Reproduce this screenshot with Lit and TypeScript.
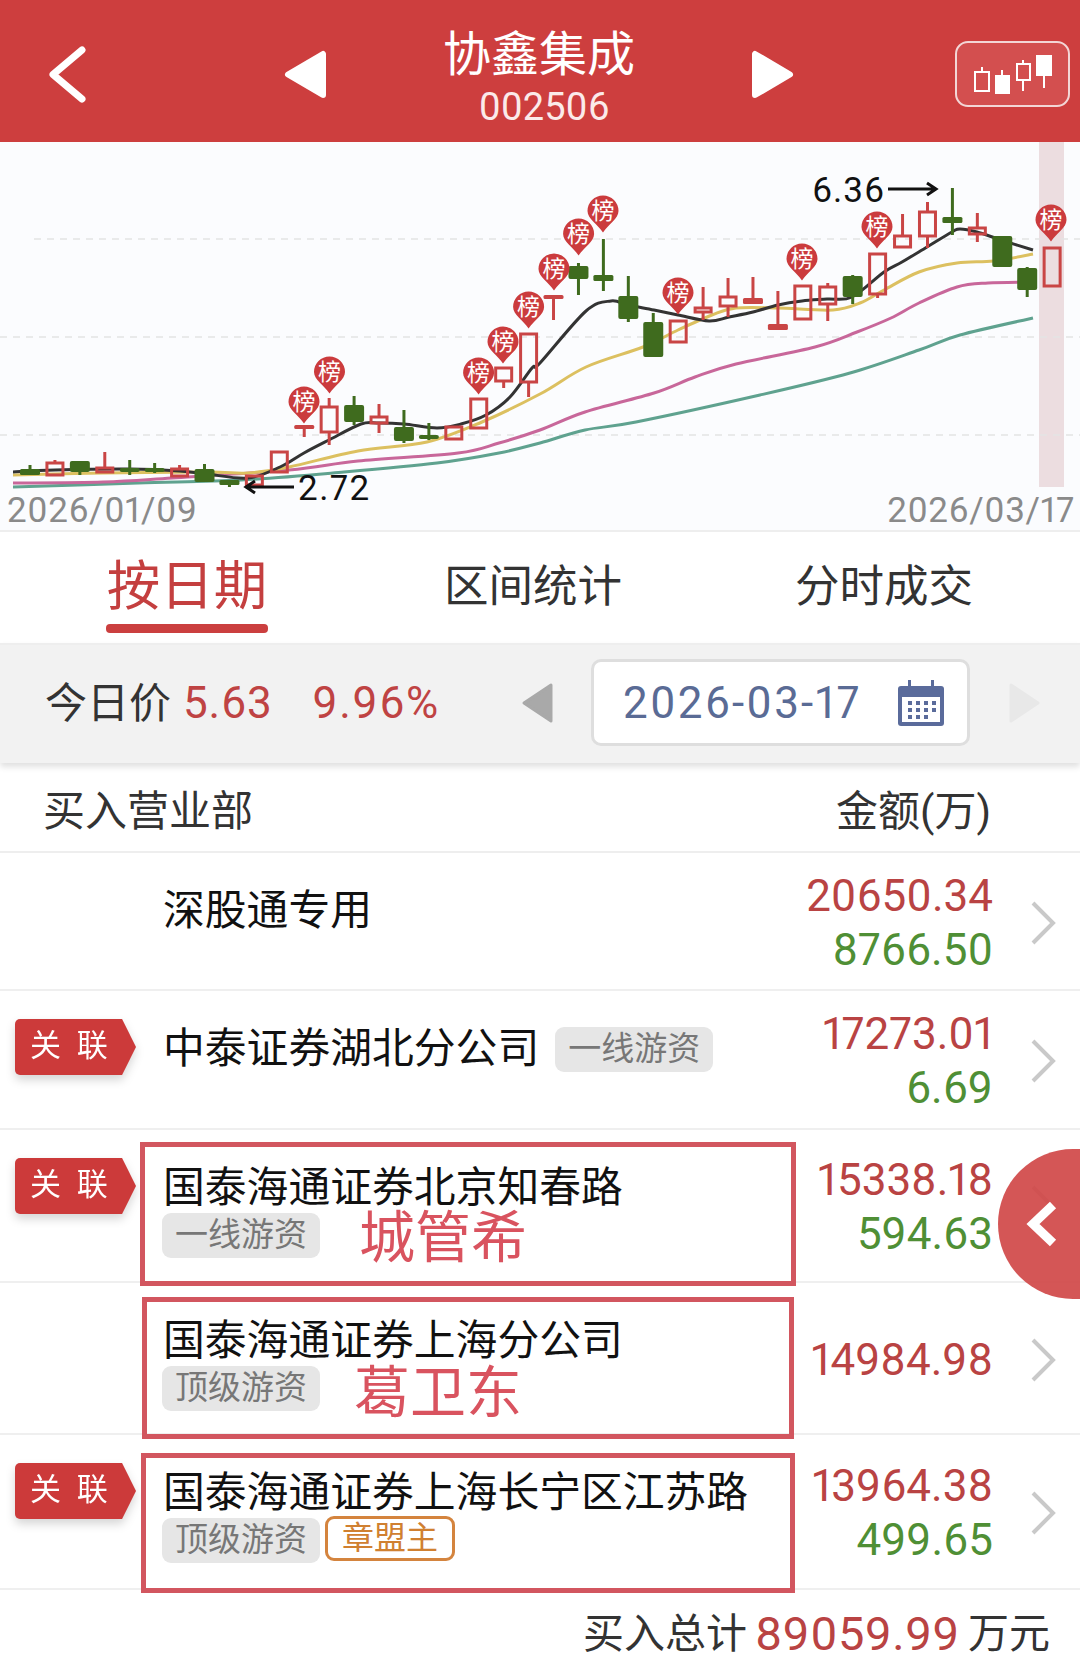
import { LitElement, html, css, svg } from 'lit';
import { customElement } from 'lit/decorators.js';

const RED = '#c94545';
const GREEN = '#3f6b1e';

// [kind, wickTop, bodyTop, bodyBottom, wickBottom] in page pixels
type Candle = ['r' | 'g', number, number, number, number];
const candles: Candle[] = [
  ['g', 465, 470, 473, 475], ['r', 460, 463, 475, 475], ['g', 461, 461, 472, 475], ['r', 452, 468, 472, 473],
  ['g', 460, 468, 472, 475], ['g', 463, 468, 472, 473], ['r', 465, 469, 476, 477], ['g', 464, 469, 482, 482],
  ['g', 480, 481, 483, 487], ['r', 476, 476, 485, 487], ['r', 451, 452, 472, 472], ['r', 426, 426, 427, 437],
  ['r', 398, 407, 432, 445], ['g', 396, 405, 422, 425], ['r', 404, 417, 423, 433], ['g', 410, 427, 441, 443],
  ['g', 423, 435, 439, 440], ['r', 427, 427, 439, 440], ['r', 399, 399, 428, 428], ['r', 368, 368, 381, 388],
  ['r', 333, 334, 382, 397], ['r', 296, 296, 297, 320], ['g', 263, 266, 279, 295], ['g', 239, 276, 279, 291],
  ['g', 276, 296, 319, 322], ['g', 313, 322, 357, 357], ['r', 321, 321, 342, 342], ['r', 287, 308, 312, 320],
  ['r', 278, 297, 306, 317], ['r', 277, 299, 302, 303], ['r', 291, 325, 328, 328], ['r', 285, 286, 319, 320],
  ['r', 283, 287, 304, 321], ['g', 275, 276, 297, 304], ['r', 253, 254, 294, 298], ['r', 214, 236, 247, 247],
  ['r', 202, 212, 236, 248], ['g', 188, 218, 221, 235], ['r', 213, 228, 234, 242], ['g', 236, 236, 267, 267],
  ['g', 267, 268, 290, 297], ['r', 248, 248, 286, 286],
];
const candleX = (i: number) => 30 + i * 24.93;

const lines = [
  { color: '#5fa28f', pts: '13,487 138,483 241,480 344,472 437,463 499,453 540,443 585,430 636,422 760,395 850,373 919,350 960,335 1033,318' },
  { color: '#c8679a', pts: '13,483 103,482 172,478 289,470 358,461 458,453 499,443 540,430 585,412 654,393 695,377 736,364 815,347 857,332 891,318 919,303 957,287 988,283 1033,282' },
  { color: '#dcc060', pts: '13,475 103,473 207,472 248,473 289,467 358,451 427,442 482,422 540,394 586,367 643,347 678,330 712,315 736,308 778,308 833,310 860,303 884,290 919,272 957,263 994,261 1033,254' },
  { color: '#333333', pts: '13,472 55,470 130,469 180,471 207,474 248,478 280,467 304,453 329,440 361,424 379,423 404,424 437,428 461,424 486,415 510,397 532,368 540,363 586,311 611,301 628,305 654,310 678,315 709,321 729,317 753,312 778,305 802,301 827,299 852,297 884,272 902,262 927,247 952,232 960,229 977,232 1001,240 1033,250' },
];

// catmull-rom through the points, the moving averages are not straight segments
const smooth = (pts: string) => {
  const p = pts.split(' ').map((s) => s.split(',').map(Number));
  let d = `M${p[0][0]} ${p[0][1]}`;
  for (let i = 0; i < p.length - 1; i++) {
    const a = p[Math.max(i - 1, 0)];
    const b = p[i];
    const c = p[i + 1];
    const e = p[Math.min(i + 2, p.length - 1)];
    d += ` C${b[0] + (c[0] - a[0]) / 6} ${b[1] + (c[1] - a[1]) / 6} ${c[0] - (e[0] - b[0]) / 6} ${c[1] - (e[1] - b[1]) / 6} ${c[0]} ${c[1]}`;
  }
  return d;
};

// 榜 pins, x and y of the circle centre
const pins = [[304, 402], [329.5, 372], [478.6, 373], [503, 342], [528.6, 307], [554, 269], [578.6, 234], [603, 211], [678, 293], [802, 259], [877, 227], [1051, 220]];

const grid = [239, 337, 435];

interface Row {
  name: string;
  height: number;
  linked?: boolean;
  tags?: string[];
  gold?: string;
  inlineTag?: boolean;
  buy: string;
  sell?: string;
}

const rows: Row[] = [
  { name: '深股通专用', height: 138, buy: '20650.34', sell: '8766.50' },
  { name: '中泰证券湖北分公司', height: 139, linked: true, tags: ['一线游资'], inlineTag: true, buy: '17273.01', sell: '6.69' },
  { name: '国泰海通证券北京知春路', height: 153, linked: true, tags: ['一线游资'], buy: '15338.18', sell: '594.63' },
  { name: '国泰海通证券上海分公司', height: 152, tags: ['顶级游资'], buy: '14984.98' },
  { name: '国泰海通证券上海长宁区江苏路', height: 155, linked: true, tags: ['顶级游资'], gold: '章盟主', buy: '13964.38', sell: '499.65' },
];

@customElement('app-root')
export class AppRoot extends LitElement {
  static styles = css`
    :host {
      display: block;
      position: relative;
      width: 1080px;
      height: 1656px;
      overflow: hidden;
      background: #fff;
      color: #333;
      font-family: Roboto, "Noto Sans CJK SC", sans-serif;
      font-variant-numeric: proportional-nums;
    }

    /* top bar */
    .top {
      display: grid;
      grid-template-columns: 284px 43px 1fr 43px 286px;
      align-items: center;
      height: 142px;
      padding-top: 6px;
      box-sizing: border-box;
      background: #cd3e3e;
      color: #fff;
    }
    .back { padding-left: 48px; }
    .top svg { display: block; }
    .title { text-align: center; padding-top: 10px; }
    .title b { display: block; font-weight: 400; font-size: 48px; line-height: 56px; }
    .title span { display: block; font-size: 38px; line-height: 49px; padding-left: 10px; color: #fbeaea; }
    .switch {
      justify-self: end;
      margin-right: 10px;
      width: 115px;
      height: 66px;
      box-sizing: border-box;
      border: 2px solid #f3d6d6;
      border-radius: 13px;
      background: #d34f4f;
    }

    /* kline */
    .chart {
      height: 390px;
      background: #fbfcfe;
      border-bottom: 2px solid #eeeeee;
      box-sizing: border-box;
    }
    .chart svg { display: block; overflow: visible; }
    .chart text { font-family: Roboto, "Noto Sans CJK SC", sans-serif; }

    /* tabs */
    .tabs {
      display: flex;
      height: 111px;
      padding-left: 14px;
      box-sizing: border-box;
    }
    .tab {
      width: 346px;
      display: flex;
      flex-direction: column;
      align-items: center;
      font-size: 44.5px;
      line-height: 60px;
      padding-top: 25px;
      box-sizing: border-box;
    }
    .tab:last-child { margin-left: 5px; }
    .tab.on {
      color: #c43f3f;
      font-size: 53.5px;
      line-height: 64px;
      padding-top: 23px;
    }
    .tab.on::after {
      content: "";
      width: 162px;
      height: 9px;
      margin-top: 5px;
      border-radius: 4px;
      background: #cb3f3f;
    }

    /* date bar */
    .dates {
      position: relative;
      display: flex;
      align-items: center;
      height: 120px;
      padding: 0 0 3px 45px;
      background: #f2f2f2;
      border-top: 2px solid #eeeeee;
      box-sizing: border-box;
      box-shadow: 0 4px 6px rgba(0, 0, 0, 0.12);
    }
    .today { width: 476px; display: flex; align-items: center; font-size: 42px; }
    .label { position: relative; top: -3px; }
    .today span.num { font-size: 44px; color: #bf4343; margin-left: 12px; letter-spacing: 0.8px; }
    .today span.num + span.num { margin-left: 40px; letter-spacing: 1.6px; }
    .datebox {
      display: flex;
      align-items: center;
      justify-content: space-between;
      width: 379px;
      height: 87px;
      margin: 0 39px 0 38px;
      padding: 0 22px 0 29px;
      box-sizing: border-box;
      background: #fff;
      border: 3px solid #dedede;
      border-radius: 10px;
      color: #5a6b95;
      font-size: 44px;
      letter-spacing: 2.2px;
    }

    /* table */
    .head {
      display: flex;
      justify-content: space-between;
      align-items: center;
      height: 90px;
      padding: 0 89px 0 43px;
      font-size: 42px;
      border-bottom: 2px solid #eeeeee;
      box-sizing: border-box;
    }
    .list { position: relative; }
    .row {
      display: grid;
      grid-template-columns: 164px 1fr auto 87px;
      border-bottom: 2px solid #efefef;
      box-sizing: border-box;
    }
    .slot { padding: 28px 0 0 15px; }
    .linked { filter: drop-shadow(0 5px 5px rgba(0, 0, 0, 0.16)); width: 121px; }
    .linked span {
      display: block;
      height: 56px;
      padding-left: 15px;
      background: #cc3a3a;
      border-radius: 5px 0 0 5px;
      clip-path: polygon(0 0, 88.5% 0, 100% 50%, 88.5% 100%, 0 100%);
      color: #fff;
      font-size: 31px;
      line-height: 54px;
      letter-spacing: 4px;
    }
    .main { padding-top: 32px; margin-left: -1px; }
    .name { font-size: 41.8px; line-height: 50px; color: #111; display: flex; align-items: flex-start; gap: 16px; white-space: nowrap; padding-top: 1px; }
    .tags { display: flex; gap: 5px; margin-left: -1px; align-items: flex-start; }
    .tag {
      height: 45px;
      width: 158px;
      display: block;
      text-align: center;
      background: #e6e6e6;
      border-radius: 9px;
      color: #777;
      font-size: 33px;
      line-height: 43px;
      flex: none;
    }
    .name .tag { margin-top: 3px; }
    .gold {
      width: 130px;
      height: 45px;
      box-sizing: border-box;
      margin-top: -2px;
      text-align: center;
      border: 3px solid #d4843e;
      border-radius: 9px;
      color: #d08030;
      font-size: 32px;
      line-height: 39px;
    }
    .money {
      align-self: center;
      text-align: right;
      font-size: 44px;
      line-height: 54px;
      padding-top: 3px;
    }
    .money div { color: #b94343; }
    .money div + div { color: #4f8f35; }
    .more { align-self: center; padding: 3px 0 0 37px; }
    .more svg { display: block; }
    .total {
      display: flex;
      justify-content: flex-end;
      align-items: center;
      gap: 8px;
      height: 44px;
      padding: 22px 30px 0 0;
      font-size: 41px;
      line-height: 44px;
    }
    .total span { color: #b94343; font-size: 47px; letter-spacing: 0.5px; }

    /* hand drawn marks over the table */
    .mark {
      position: absolute;
      box-sizing: border-box;
      border: 5px solid #d2565f;
      padding-top: 61px;
      color: #d9535f;
      font-size: 56px;
      line-height: 60px;
    }
    .mark-a { left: 140px; top: 289px; width: 656px; height: 144px; padding-left: 214px; }
    .mark-b { left: 142px; top: 444px; width: 652px; height: 142px; padding-left: 207px; }
    .mark-c { left: 141px; top: 600px; width: 654px; height: 140px; }

    .fold {
      position: absolute;
      right: 0;
      top: 1149px;
      width: 82px;
      height: 150px;
      border-radius: 75px 0 0 75px;
      background: rgba(208, 72, 72, 0.92);
      display: flex;
      align-items: center;
      padding-left: 28px;
      box-sizing: border-box;
    }
  `;

  private chart() {
    return svg`
      <rect x="1039" y="142" width="25" height="345" fill="#ecdde0"></rect>
      ${grid.map((y, i) => svg`<line x1=${i === 0 ? 34 : 0} x2="1080" y1=${y} y2=${y} stroke="#e4e4e4" stroke-width="1.5" stroke-dasharray="7 6"></line>`)}
      ${lines.map((l) => svg`<path d=${smooth(l.pts)} fill="none" stroke=${l.color} stroke-width="3" stroke-linejoin="round"></path>`)}
      ${candles.map((c, i) => this.candle(c, candleX(i)))}
      ${pins.map(([x, y]) => svg`
        <path d="M${x - 15.5} ${y} a15.5 15.5 0 0 1 31 0 c0 8 -10 13 -15.5 21.5 c-5.5 -8.5 -15.5 -13.5 -15.5 -21.5 z" fill="#cb3b3d"></path>
        <text x=${x} y=${y + 8} font-size="23" fill="#fff" text-anchor="middle">榜</text>`)}
      <text x="812" y="202" font-size="35" letter-spacing="1" fill="#111">6.36</text>
      <path d="M888 189 H935 M927 183 L936 189 L927 195" fill="none" stroke="#111" stroke-width="3"></path>
      <text x="298" y="500" font-size="35" letter-spacing="1.5" fill="#111">2.72</text>
      <path d="M294 487 H247 M255 481 L246 487 L255 493" fill="none" stroke="#111" stroke-width="3"></path>
      <text x="7" y="522" font-size="35" letter-spacing="0.6" fill="#8a8a8a">2026/01/09</text>
      <text x="1075" y="522" font-size="35" letter-spacing="0.6" fill="#8a8a8a" text-anchor="end">2026/03/17</text>
    `;
  }

  private candle([kind, wt, bt, bb, wb]: Candle, x: number) {
    const color = kind === 'r' ? RED : GREEN;
    const wick = svg`<line x1=${x} x2=${x} y1=${wt} y2=${bt} stroke=${color} stroke-width="3"></line>
      <line x1=${x} x2=${x} y1=${bb} y2=${wb} stroke=${color} stroke-width="3"></line>`;
    if (bb - bt <= 3) {
      return svg`${wick}<rect x=${x - 10} y=${bt - 1} width="20" height=${bb - bt + 3} rx="1.5" fill=${color}></rect>`;
    }
    if (kind === 'g') {
      return svg`${wick}<rect x=${x - 10} y=${bt} width="20" height=${bb - bt} rx="2" fill=${color}></rect>`;
    }
    return svg`${wick}<rect x=${x - 8} y=${bt} width="16" height=${bb - bt} fill="none" stroke=${color} stroke-width="3"></rect>`;
  }

  private chevron() {
    return html`<svg width="26" height="44" viewBox="0 0 26 44"><path d="M3 2 L23 22 L3 42" fill="none" stroke="#c9c9c9" stroke-width="4"></path></svg>`;
  }

  private row(r: Row) {
    const tags = html`${r.tags?.map((t) => html`<span class="tag">${t}</span>`)}`;
    return html`
      <div class="row" style="height:${r.height}px">
        <div class="slot">${r.linked ? html`<div class="linked"><span>关 联</span></div>` : ''}</div>
        <div class="main">
          <div class="name">${r.name}${r.inlineTag ? tags : ''}</div>
          ${r.inlineTag || !r.tags ? '' : html`<div class="tags">${tags}${r.gold ? html`<span class="gold">${r.gold}</span>` : ''}</div>`}
        </div>
        <div class="money">
          <div>${r.buy}</div>
          ${r.sell ? html`<div>${r.sell}</div>` : ''}
        </div>
        <div class="more">${this.chevron()}</div>
      </div>
    `;
  }

  render() {
    return html`
      <div class="top">
        <div class="back">
          <svg width="38" height="57" viewBox="0 0 38 57"><path d="M34 4 L5 28.5 L34 53" fill="none" stroke="#fff" stroke-width="7" stroke-linecap="round" stroke-linejoin="round"></path></svg>
        </div>
        <svg width="43" height="49" viewBox="0 0 43 49"><path d="M39 4 V45 L4 24.5 Z" fill="#fff" stroke="#fff" stroke-width="6" stroke-linejoin="round"></path></svg>
        <div class="title"><b>协鑫集成</b><span>002506</span></div>
        <svg width="43" height="49" viewBox="0 0 43 49"><path d="M4 4 V45 L39 24.5 Z" fill="#fff" stroke="#fff" stroke-width="6" stroke-linejoin="round"></path></svg>
        <div class="switch">
          <svg width="111" height="62" viewBox="957 43 111 62">
            <g fill="none" stroke="#fff" stroke-width="2">
              <rect x="975" y="72" width="14" height="19"></rect><path d="M982 67 V72"></path>
              <rect x="1017" y="64" width="13" height="16"></rect><path d="M1023 60 V64 M1023 80 V91"></path>
              <path d="M1002 70 V76 M1044 76 V88"></path>
            </g>
            <rect x="995" y="75" width="15" height="19" fill="#fff"></rect>
            <rect x="1036" y="55" width="16" height="21" fill="#fff"></rect>
          </svg>
        </div>
      </div>

      <div class="chart">
        <svg width="1080" height="388" viewBox="0 142 1080 388">${this.chart()}</svg>
      </div>

      <div class="tabs">
        <div class="tab on">按日期</div>
        <div class="tab">区间统计</div>
        <div class="tab">分时成交</div>
      </div>

      <div class="dates">
        <div class="today"><span class="label">今日价</span><span class="num">5.63</span><span class="num">9.96%</span></div>
        <svg width="32" height="40" viewBox="0 0 32 40"><path d="M30 2 V38 L3 20 Z" fill="#a9a9a9" stroke="#a9a9a9" stroke-width="3" stroke-linejoin="round"></path></svg>
        <div class="datebox">
          2026-03-17
          <svg width="48" height="46" viewBox="0 0 48 46">
            <rect x="1" y="6" width="46" height="40" rx="3" fill="#5a6b9b"></rect>
            <rect x="5" y="17" width="38" height="25" fill="#fff"></rect>
            <rect x="11" y="0" width="3" height="12" fill="#5a6b9b"></rect>
            <rect x="34" y="0" width="3" height="12" fill="#5a6b9b"></rect>
            <g fill="#5a6b9b">
              <rect x="11" y="21" width="4" height="4"></rect><rect x="19" y="21" width="4" height="4"></rect><rect x="27" y="21" width="4" height="4"></rect><rect x="35" y="21" width="4" height="4"></rect>
              <rect x="11" y="28" width="4" height="4"></rect><rect x="19" y="28" width="4" height="4"></rect><rect x="27" y="28" width="4" height="4"></rect><rect x="35" y="28" width="4" height="4"></rect>
              <rect x="11" y="35" width="4" height="4"></rect><rect x="19" y="35" width="4" height="4"></rect><rect x="27" y="35" width="4" height="4"></rect>
            </g>
          </svg>
        </div>
        <svg width="32" height="40" viewBox="0 0 32 40"><path d="M2 2 V38 L29 20 Z" fill="#e8e8e8" stroke="#e8e8e8" stroke-width="3" stroke-linejoin="round"></path></svg>
      </div>

      <div class="head"><span>买入营业部</span><span>金额(万)</span></div>

      <div class="list">
        ${rows.map((r) => this.row(r))}
        <div class="mark mark-a">城管希</div>
        <div class="mark mark-b">葛卫东</div>
        <div class="mark mark-c"></div>
      </div>

      <div class="total">买入总计<span>89059.99</span>万元</div>

      <div class="fold">
        <svg width="32" height="46" viewBox="0 0 32 46"><path d="M27 4 L7 23 L27 42" fill="none" stroke="#fff" stroke-width="9" stroke-linejoin="miter"></path></svg>
      </div>
    `;
  }
}
